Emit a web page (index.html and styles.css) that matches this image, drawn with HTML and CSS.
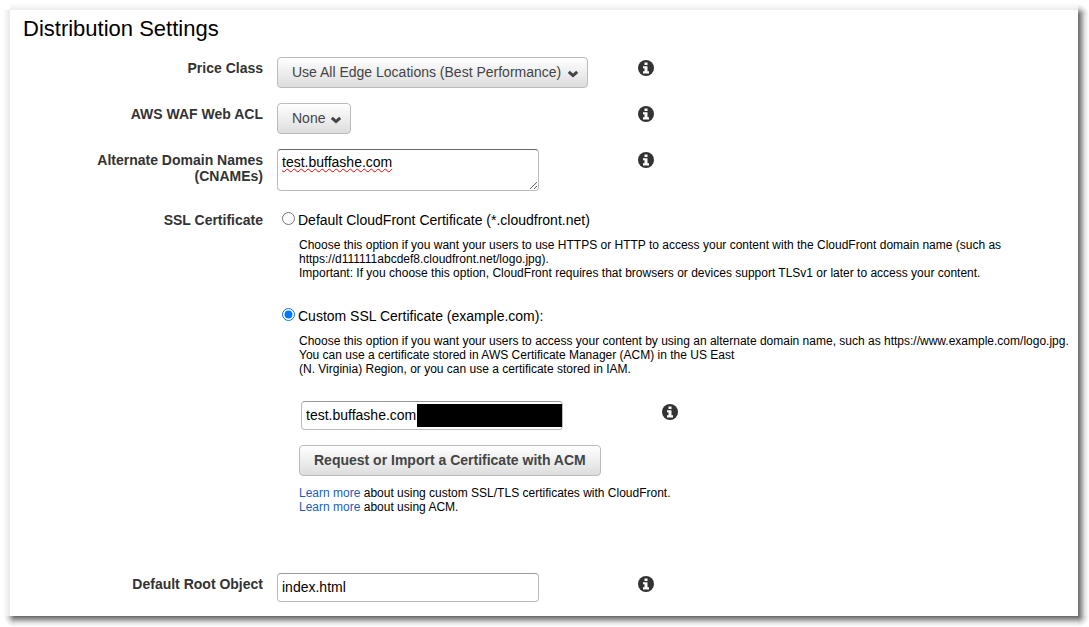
FILE: index.html
```html
<!DOCTYPE html>
<html lang="en">
<head>
    <meta charset="UTF-8">
    <meta name="viewport" content="width=device-width, initial-scale=1.0">
    <title>Distribution Settings</title>
    <link rel="stylesheet" href="styles.css">
</head>
<body>

    <!-- shared icons -->
    <svg class="icons" aria-hidden="true">
        <symbol id="info" viewBox="0 0 16 16">
            <circle cx="8" cy="8" r="8" fill="#333"/>
            <path d="M6.5 2.5h3v2.5h-3zM5 6.2h4.5v5H11v2.3H5v-2.3h1.5V8.3H5z" fill="#fff"/>
        </symbol>
        <symbol id="chevron" viewBox="0 0 12 8">
            <path d="M1.8 1.8L6 5.6l4.2-3.8" fill="none" stroke="#444" stroke-width="3"/>
        </symbol>
    </svg>

    <div class="shadow">
    <form class="panel">
        <h1>Distribution Settings</h1>

        <div class="row">
            <label class="name" for="priceClass">Price Class</label>
            <div class="dropdown">
                <select id="priceClass">
                    <option>Use All Edge Locations (Best Performance)</option>
                </select>
                <svg class="chevron"><use href="#chevron"/></svg>
            </div>
            <button type="button" class="info" aria-label="About Price Class"><svg><use href="#info"/></svg></button>
        </div>

        <div class="row">
            <label class="name" for="webAcl">AWS WAF Web ACL</label>
            <div class="dropdown">
                <select id="webAcl">
                    <option>None</option>
                </select>
                <svg class="chevron"><use href="#chevron"/></svg>
            </div>
            <button type="button" class="info" aria-label="About AWS WAF Web ACL"><svg><use href="#info"/></svg></button>
        </div>

        <div class="row">
            <label class="name" for="cnames">Alternate Domain Names (CNAMEs)</label>
            <textarea id="cnames" class="field misspelled" spellcheck="false">test.buffashe.com</textarea>
            <button type="button" class="info" aria-label="About Alternate Domain Names"><svg><use href="#info"/></svg></button>
        </div>

        <div class="row ssl" role="radiogroup" aria-labelledby="sslName">
            <span class="name" id="sslName">SSL Certificate</span>
            <div class="options">
                <div class="option">
                    <input type="radio" name="ssl" id="sslDefault">
                    <label for="sslDefault">Default CloudFront Certificate (*.cloudfront.net)</label>
                </div>
                <p class="help">
                    Choose this option if you want your users to use HTTPS or HTTP to access your content with the CloudFront domain name (such as https://d111111abcdef8.cloudfront.net/logo.jpg).<br>
                    Important: If you choose this option, CloudFront requires that browsers or devices support TLSv1 or later to access your content.
                </p>

                <div class="option">
                    <input type="radio" name="ssl" id="sslCustom" checked>
                    <label for="sslCustom">Custom SSL Certificate (example.com):</label>
                </div>
                <p class="help">
                    Choose this option if you want your users to access your content by using an alternate domain name, such as https://www.example.com/logo.jpg.<br>
                    You can use a certificate stored in AWS Certificate Manager (ACM) in the US East<br>
                    (N. Virginia) Region, or you can use a certificate stored in IAM.
                </p>

                <div class="certificate">
                    <div class="cert-field">
                        <input type="text" class="field" aria-label="Custom SSL Certificate" value="test.buffashe.com" spellcheck="false">
                        <span class="redacted"></span>
                    </div>
                    <button type="button" class="info" aria-label="About Custom SSL Certificate"><svg><use href="#info"/></svg></button>
                </div>

                <button type="button" class="request">Request or Import a Certificate with ACM</button>
                <p class="links">
                    <a href="#">Learn more</a> about using custom SSL/TLS certificates with CloudFront.<br>
                    <a href="#">Learn more</a> about using ACM.
                </p>
            </div>
        </div>

        <div class="row">
            <label class="name" for="rootObject">Default Root Object</label>
            <input type="text" class="field" id="rootObject" value="index.html">
            <button type="button" class="info" aria-label="About Default Root Object"><svg><use href="#info"/></svg></button>
        </div>
    </form>
    </div>

</body>
</html>
```

FILE: styles.css
```css
* {
    box-sizing: border-box;
}

body {
    margin: 0;
    background: #fff;
    color: #000;
    font-family: "Liberation Sans", Arial, sans-serif;
    font-size: 14px;
    line-height: 16px;
}

input, select, textarea, button {
    font: inherit;
    margin: 0;
}

.icons {
    display: none;
}

/* frame around the panel: dark right and bottom edges, faint top and left */
.shadow {
    display: grid;
    grid-template-columns: 10px 1fr 11px;
    grid-template-rows: 10px auto 11px;
    background:
        radial-gradient(circle at 0 0, #666 0, #999 3px, #ddd 7px, #fff 11px) right bottom / 11px 11px,
        linear-gradient(to right, #666, #999 3px, #e4e4e4 7px, #fff) right 15px / 11px calc(100% - 26px),
        linear-gradient(#666, #999 3px, #e4e4e4 7px, #fff) 15px bottom / calc(100% - 26px) 11px,
        radial-gradient(circle at 0 100%, #666 0, #999 3px, #ddd 7px, #fff 11px) right 4px / 11px 11px,
        radial-gradient(circle at 100% 0, #666 0, #999 3px, #ddd 7px, #fff 11px) 4px bottom / 11px 11px,
        linear-gradient(to top, #eee, #fff 7px) 10px 0 / calc(100% - 21px) 10px,
        linear-gradient(to left, #e8e8e8, #fff 7px) 0 10px / 10px calc(100% - 21px);
    background-repeat: no-repeat;
}

.panel {
    grid-area: 2 / 2;
    display: flex;
    flex-direction: column;
    padding: 6px 9px 14px 0;
    background: #fff;
}

h1 {
    margin: 0 0 15px 13px;
    font-size: 22px;
    font-weight: normal;
    line-height: 26px;
}

/* name | control | info button */
.row {
    display: grid;
    grid-template-columns: 253px 347px 1fr;
    column-gap: 14px;
    align-items: start;
    justify-items: start;
    margin-bottom: 15px;
}

.row:last-child {
    margin-bottom: 0;
}

.name {
    justify-self: end;
    max-width: 180px;
    padding-top: 3px;
    color: #333;
    font-weight: bold;
    text-align: right;
}

.info {
    margin-top: 3px;
    padding: 0;
    border: 0;
    background: none;
    cursor: pointer;
}

.info svg {
    display: block;
    width: 16px;
    height: 16px;
}

/* drop-downs */
.dropdown {
    display: grid;
    align-items: center;
}

.dropdown select,
.chevron {
    grid-area: 1 / 1;
}

.dropdown select {
    appearance: none;
    padding: 0 24px 2px 14px;
}

.chevron {
    justify-self: end;
    width: 12px;
    height: 8px;
    margin: 2px 9px 0 0;
    pointer-events: none;
}

.dropdown select,
.request {
    height: 31px;
    border: 1px solid #bbb;
    border-radius: 4px;
    background: linear-gradient(#fff, #ddd);
    color: #444;
}

/* text boxes */
.field {
    display: block;
    width: 262px;
    height: 29px;
    padding: 0 4px 2px;
    border: 1px solid #bbb;
    border-top-color: #999;
    border-radius: 4px;
    background: #fff;
    color: #000;
}

textarea.field {
    height: 42px;
    padding-top: 4px;
    border-top-color: #666;
}

.misspelled {
    text-decoration: underline wavy #f00 1px;
}

/* certificate options */
.ssl {
    grid-template-columns: 253px 1fr;
    margin: 3px 0 59px;
}

.option {
    display: flex;
    gap: 3px;
    padding: 3px 0 0 5px;
}

.option input {
    width: 13px;
    height: 13px;
}

.help,
.links {
    margin: 10px 0 25px 22px;
    font-size: 12px;
    line-height: 14px;
}

.certificate {
    display: grid;
    grid-template-columns: 347px 1fr;
    column-gap: 14px;
    align-items: start;
    margin: 0 0 15px 24px;
}

.cert-field {
    position: relative;
    width: 262px;
}

.redacted {
    position: absolute;
    top: 3px;
    right: 1px;
    bottom: 3px;
    width: 145px;
    background: #000;
}

.request {
    display: block;
    margin-left: 22px;
    padding: 0 14px 2px;
    font-weight: bold;
}

.links {
    margin-bottom: 0;
}

.links a {
    color: #1a5dba;
    text-decoration: none;
}
```
